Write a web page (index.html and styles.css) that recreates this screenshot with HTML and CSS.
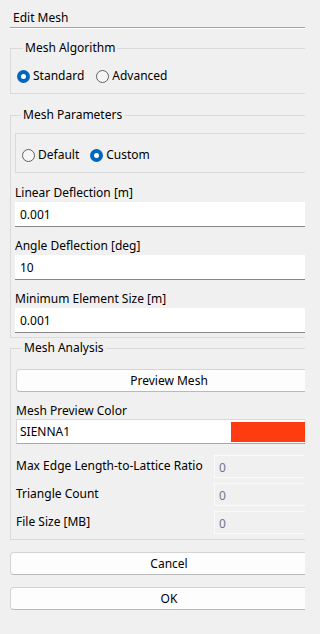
FILE: index.html
```html
<!DOCTYPE html>
<html>
<head>
<meta charset="utf-8">
<link rel="stylesheet" href="styles.css">
</head>
<body>
<div class="clip">
  <div class="dialog">
    <div class="title">Edit Mesh</div>
    <div class="sep"></div>

    <fieldset class="group g-algo">
      <legend>Mesh Algorithm</legend>
      <div class="radios">
        <label class="radio"><span class="dot on"></span>Standard</label>
        <label class="radio"><span class="dot"></span>Advanced</label>
      </div>
    </fieldset>

    <fieldset class="group g-params">
      <legend>Mesh Parameters</legend>
      <div class="frame">
        <div class="radios">
          <label class="radio"><span class="dot"></span>Default</label>
          <label class="radio"><span class="dot on"></span>Custom</label>
        </div>
      </div>
      <div class="field first">
        <div class="lbl">Linear Deflection [m]</div>
        <div class="input">0.001</div>
      </div>
      <div class="field">
        <div class="lbl">Angle Deflection [deg]</div>
        <div class="input">10</div>
      </div>
      <div class="field">
        <div class="lbl">Minimum Element Size [m]</div>
        <div class="input">0.001</div>
      </div>
    </fieldset>

    <fieldset class="group g-analysis">
      <legend>Mesh Analysis</legend>
      <div class="btn preview">Preview Mesh</div>
      <div class="lbl color-lbl">Mesh Preview Color</div>
      <div class="color-field">
        <span class="color-name">SIENNA1</span>
        <span class="swatch"></span>
      </div>
      <div class="stats">
        <div class="stat-lbl">Max Edge Length-to-Lattice Ratio</div>
        <div class="ro">0</div>
        <div class="stat-lbl">Triangle Count</div>
        <div class="ro">0</div>
        <div class="stat-lbl">File Size [MB]</div>
        <div class="ro">0</div>
      </div>
    </fieldset>

    <div class="btn cancel">Cancel</div>
    <div class="btn ok">OK</div>
  </div>
</div>
</body>
</html>
```

FILE: styles.css
```css
html, body {
  margin: 0;
  padding: 0;
  background: #f0f0f0;
}

body {
  font-family: "Noto Sans", "Open Sans", sans-serif;
  font-size: 12px;
  line-height: 16px;
  color: #000;
}

.clip {
  width: 305px;
  height: 634px;
  overflow: hidden;
}

.dialog {
  margin-left: 10px;
  width: 318px;
  padding-top: 10px;
}

.title {
  padding-left: 3px;
  height: 16px;
}

.sep {
  margin-top: 1px;
  height: 1px;
  background: #a0a0a0;
  border-bottom: 1px solid #ffffff;
}

.group {
  margin: 0;
  padding: 0;
  border: 1px solid #dadada;
  min-width: 0;
}

.group legend {
  margin-left: 6px;
  padding: 0 2px;
  line-height: 16px;
  height: 16px;
}

.g-algo {
  margin-top: 11px;
  padding: 12px 6px 9px 6px;
}

.g-params {
  margin-top: 13px;
  padding: 0 4px 4px 4px;
}

.g-analysis {
  margin-top: 2px;
  padding: 0 5px 5px 5px;
}

.radios {
  display: flex;
  align-items: center;
  gap: 12px;
  height: 16px;
}

.radio {
  display: flex;
  align-items: center;
  gap: 3px;
}

.dot {
  width: 11px;
  height: 11px;
  border: 1px solid #606060;
  border-radius: 50%;
  background: #f6f6f6;
  box-sizing: content-box;
  position: relative;
}

.dot.on {
  width: 13px;
  height: 13px;
  border: none;
  background: #0067c0;
}

.dot.on::after {
  content: "";
  position: absolute;
  left: 4px;
  top: 4px;
  width: 5px;
  height: 5px;
  border-radius: 50%;
  background: #ffffff;
}

.frame {
  margin-top: 10px;
  border: 1px solid #dadada;
  padding: 13px 6px 9px 6px;
}

.frame .radios {
  gap: 11px;
}

.field {
  margin-top: 11px;
}

.field.first {
  margin-top: 12px;
}

.lbl {
  height: 16px;
}

.input {
  margin-top: 1px;
  height: 24px;
  line-height: 25px;
  background: #ffffff;
  border-bottom: 1px solid #868686;
  padding-left: 5px;
}

.btn {
  height: 21px;
  line-height: 22px;
  text-align: center;
  background: #fdfdfd;
  border: 1px solid #d3d3d3;
  border-bottom-color: #b9b9b9;
  border-radius: 4px;
}

.preview {
  margin-top: 13px;
}

.color-lbl {
  margin-top: 11px;
}

.color-field {
  height: 23px;
  background: #ffffff;
  border: 1px solid #d9d9d9;
  border-bottom-color: #a8a8a8;
  display: flex;
  align-items: center;
  padding-left: 3px;
}

.color-name {
  flex: 1;
  padding-top: 1px;
}

.swatch {
  width: 87px;
  height: 20px;
  margin-right: 3px;
  background: #ff3b12;
}

.stats {
  margin-top: 11px;
  display: grid;
  grid-template-columns: 198px 1fr;
  row-gap: 5px;
  align-items: center;
}

.stat-lbl {
  margin-top: -2px;
}

.ro {
  height: 21px;
  line-height: 24px;
  border: 1px solid #fafafa;
  background: #f0f0f0;
  color: #6f7785;
  padding-left: 4px;
}

.cancel {
  margin-top: 12px;
}

.ok {
  margin-top: 12px;
}
```
